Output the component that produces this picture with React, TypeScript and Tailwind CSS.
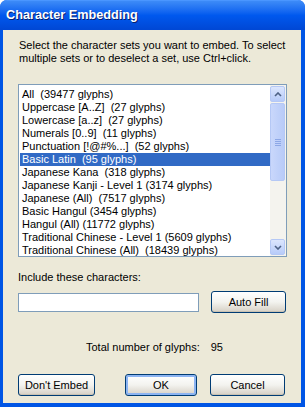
import React from "react";

const items = [
  "All  (39477 glyphs)",
  "Uppercase [A..Z]  (27 glyphs)",
  "Lowercase [a..z]  (27 glyphs)",
  "Numerals [0..9]  (11 glyphs)",
  "Punctuation [!@#%...]  (52 glyphs)",
  "Basic Latin  (95 glyphs)",
  "Japanese Kana  (318 glyphs)",
  "Japanese Kanji - Level 1 (3174 glyphs)",
  "Japanese (All)  (7517 glyphs)",
  "Basic Hangul (3454 glyphs)",
  "Hangul (All) (11772 glyphs)",
  "Traditional Chinese - Level 1 (5609 glyphs)",
  "Traditional Chinese (All)  (18439 glyphs)",
];

function XPButton({ children, focused, className }: { children: React.ReactNode; focused?: boolean; className?: string }) {
  return (
    <div
      className={
        "h-[22px] rounded-[3px] border border-[#003C74] bg-gradient-to-b from-[#FFFFFF] via-[#F3F3EF] to-[#D6D0C5] flex items-center justify-center text-[11px] text-black " +
        (focused ? "shadow-[inset_0_0_0_2px_#8CB4F2] " : "shadow-[inset_0_-1px_0_#C9C2B3] ") +
        (className ?? "")
      }
    >
      {children}
    </div>
  );
}

export default function App() {
  return (
    <div className="w-[305px] h-[407px] flex flex-col bg-[#0055E5] rounded-t-[7px] overflow-hidden" style={{ fontFamily: '"Liberation Sans", Arial, sans-serif' }}>
      <div className="h-[30px] shrink-0 flex items-center pl-[6px] bg-gradient-to-b from-[#3D8BF7] via-[#0058EE] to-[#0047D4] border-t border-[#4A96FF]">
        <span className="text-white font-bold text-[12.7px] leading-none [text-shadow:1px_1px_0_#0A1E6A]">
          Character Embedding
        </span>
      </div>
      <div className="flex-1 ml-[3px] mr-[4px] mb-[4px] bg-[#ECE9D8] flex flex-col pl-[15px] pr-[14px] pt-[9px] text-[11px] text-black">
        <div className="leading-[13px] pl-px whitespace-nowrap">
          Select the character sets you want to embed. To select
          <br />
          multiple sets or to deselect a set, use Ctrl+click.
        </div>
        <div className="mt-[19px] h-[173px] border border-[#7F9DB9] bg-white flex overflow-hidden">
          <div className="flex-1 pl-px pt-[3px] overflow-hidden">
            {items.map((t, i) => (
              <div
                key={i}
                className={
                  "h-[13px] leading-[13px] pl-[2px] whitespace-pre " + (i === 5 ? "bg-[#316AC5] text-white" : "")
                }
              >
                {t}
              </div>
            ))}
          </div>
          <div className="w-[16px] flex flex-col bg-[#F4F3EE] pb-px pr-px pt-px">
            <div className="h-[16px] shrink-0 rounded-[2px] border border-[#B5C8F5] bg-gradient-to-b from-[#DCE6FD] to-[#B7CBF9] flex items-center justify-center">
              <svg width="8" height="5" viewBox="0 0 8 5"><path d="M1 4 L4 1 L7 4" stroke="#4D6185" strokeWidth="1.6" fill="none" /></svg>
            </div>
            <div className="h-[78px] shrink-0 mt-px rounded-[2px] border border-[#B5C8F5] bg-gradient-to-r from-[#C9D7FB] to-[#B8CBF8] flex flex-col items-center justify-center gap-[1px]">
              <div className="w-[6px] h-px bg-[#8DA7E6]" />
              <div className="w-[6px] h-px bg-[#8DA7E6]" />
              <div className="w-[6px] h-px bg-[#8DA7E6]" />
              <div className="w-[6px] h-px bg-[#8DA7E6]" />
            </div>
            <div className="flex-1" />
            <div className="h-[16px] shrink-0 rounded-[2px] border border-[#B5C8F5] bg-gradient-to-b from-[#DCE6FD] to-[#B7CBF9] flex items-center justify-center">
              <svg width="8" height="5" viewBox="0 0 8 5"><path d="M1 1 L4 4 L7 1" stroke="#4D6185" strokeWidth="1.6" fill="none" /></svg>
            </div>
          </div>
        </div>
        <div className="mt-[14px] leading-[13px]">Include these characters:</div>
        <div className="mt-[7px] flex items-center">
          <div className="w-[181px] h-[19px] border border-[#7F9DB9] bg-white" />
          <XPButton className="ml-[12px] w-[75px]">Auto Fill</XPButton>
        </div>
        <div className="mt-[28px] leading-[13px] flex pl-[68px]">
          <span>Total number of glyphs:</span>
          <span className="ml-[11px]">95</span>
        </div>
        <div className="mt-[20px] flex">
          <XPButton className="w-[77px]">Don&apos;t Embed</XPButton>
          <XPButton focused className="ml-[30px] w-[72px]">OK</XPButton>
          <XPButton className="ml-[13px] w-[75px]">Cancel</XPButton>
        </div>
      </div>
    </div>
  );
}
